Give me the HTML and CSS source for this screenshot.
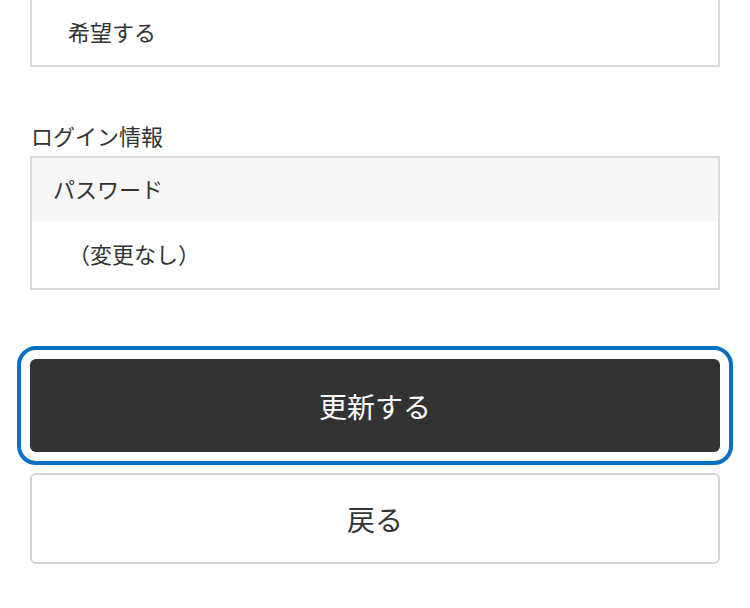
FILE: index.html
```html
<!DOCTYPE html>
<html lang="ja">
<head>
<meta charset="utf-8">
<title>確認</title>
<link rel="stylesheet" href="styles.css">
</head>
<body>
<div class="page">
  <dl class="box box-first">
    <dd class="value">希望する</dd>
  </dl>
  <p class="label">ログイン情報</p>
  <dl class="box">
    <dt class="head">パスワード</dt>
    <dd class="value">（変更なし）</dd>
  </dl>
  <div class="actions">
    <button class="btn btn-primary" type="button">更新する</button>
    <button class="btn btn-back" type="button">戻る</button>
  </div>
</div>
</body>
</html>
```
FILE: styles.css
```css
* { box-sizing: border-box; }
html, body {
  margin: 0;
  padding: 0;
  background: #fff;
}
body {
  font-family: "Noto Sans CJK JP", "Noto Sans", sans-serif;
  color: #333;
  font-size: 22px;
}
.page {
  padding: 0 30px;
}
.box {
  margin: 0;
  border: 2px solid #dadada;
}
.box-first {
  margin-top: -2px;
}
.head {
  height: 63px;
  display: flex;
  align-items: center;
  padding: 0 0 4px 21px;
  background: #f7f7f7;
}
.value {
  margin: 0;
  height: 67px;
  display: flex;
  align-items: center;
  padding: 0 0 4px 36px;
}
.box-first .value {
  height: 65px;
}
.label {
  margin: 51px 0 4px;
  line-height: 34px;
  padding-left: 1px;
}
.actions {
  display: flex;
  flex-direction: column;
  gap: 21px;
  margin-top: 69px;
}
.btn {
  font-family: "Noto Sans CJK JP", "Noto Sans", sans-serif;
  font-size: 28px;
  width: 100%;
  border-radius: 6px;
  cursor: pointer;
  padding: 0;
}
.btn-primary {
  height: 93px;
  background: #333;
  color: #fff;
  border: none;
  outline: 4px solid #0a70c2;
  outline-offset: 9px;
}
.btn-back {
  height: 91px;
  background: #fff;
  color: #333;
  border: 2px solid #d4d4d4;
}
```
